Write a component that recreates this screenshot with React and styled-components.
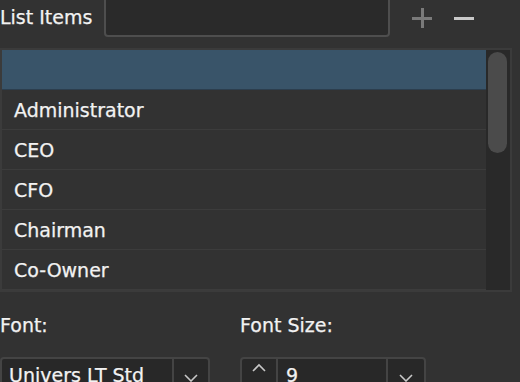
import React from 'react';
import styled, { createGlobalStyle } from 'styled-components';

const GlobalStyle = createGlobalStyle`
  html, body {
    margin: 0;
    padding: 0;
    background: #323232;
    overflow: hidden;
  }
  * { box-sizing: border-box; }
`;

const Panel = styled.div`
  width: 520px;
  height: 382px;
  overflow: hidden;
  background: #323232;
  color: #f2f2f2;
  font-family: "DejaVu Sans", "Noto Sans", sans-serif;
  -webkit-text-stroke: 0.25px #f2f2f2;
`;

const Header = styled.div`
  display: flex;
  align-items: flex-end;
  height: 37px;
`;

const HeaderLabel = styled.div`
  font-size: 19px;
  line-height: 1;
  padding-bottom: 10px;
  width: 104px;
`;

const TextInput = styled.div`
  width: 286px;
  height: 42px;
  margin-top: -5px;
  background: #2a2a2a;
  border: 2px solid #4e4e4e;
  border-radius: 4px;
`;

const IconButton = styled.div`
  width: 20px;
  height: 20px;
  align-self: center;
  margin-left: ${(p) => p.$gap}px;
  margin-top: -2px;
  position: relative;
  &::before, &::after {
    content: '';
    position: absolute;
    background: ${(p) => p.$color};
  }
  &::before {
    left: 0;
    right: 0;
    top: 9px;
    height: 3px;
  }
  &::after {
    display: ${(p) => (p.$plus ? 'block' : 'none')};
    top: 0;
    bottom: 0;
    left: 9px;
    width: 3px;
  }
`;

const ListFrame = styled.div`
  margin: 11px 0 0 0;
  width: 512px;
  height: 244px;
  border: 2px solid #3b3b3b;
  display: flex;
  background: #323232;
`;

const Rows = styled.div`
  flex: 1;
  display: flex;
  flex-direction: column;
`;

const Row = styled.div`
  height: 40px;
  flex: none;
  display: flex;
  align-items: center;
  padding: 1px 0 0 12px;
  font-size: 19px;
  background: ${(p) => (p.$selected ? '#395469' : '#323232')};
  border-bottom: 1px solid ${(p) => (p.$selected ? '#2c3e4e' : '#3c3c3c')};
`;

const ScrollTrack = styled.div`
  width: 24px;
  background: #292929;
  padding: 2px 2px 0 2px;
`;

const ScrollThumb = styled.div`
  height: 101px;
  width: 19px;
  border-radius: 10px;
  background: #4b4b4b;
`;

const FieldRow = styled.div`
  display: grid;
  grid-template-columns: 240px 186px;
  margin-top: 22px;
`;

const Field = styled.div`
  display: flex;
  flex-direction: column;
`;

const FieldLabel = styled.div`
  font-size: 19px;
  line-height: 22px;
  height: 43px;
`;

const Combo = styled.div`
  display: flex;
  width: ${(p) => p.$width}px;
  height: 40px;
  background: #282828;
  border: 2px solid #444;
  border-radius: 4px;
`;

const ComboValue = styled.div`
  flex: 1;
  font-size: 19px;
  padding: 7px 0 0 ${(p) => p.$pad}px;
  line-height: 1;
  white-space: nowrap;
`;

const ComboSide = styled.div`
  width: ${(p) => p.$width}px;
  display: flex;
  justify-content: center;
  padding-top: ${(p) => p.$top}px;
  border-left: ${(p) => (p.$left ? 'none' : '2px solid #444')};
  border-right: ${(p) => (p.$left ? '2px solid #444' : 'none')};
`;

const Chevron = ({ up }) => (
  <svg width="16" height="10" viewBox="0 0 16 10">
    <path
      d={up ? 'M2 8 L8 2 L14 8' : 'M2 2 L8 8 L14 2'}
      fill="none"
      stroke="#c8c8c8"
      strokeWidth="1.6"
    />
  </svg>
);

const items = ['', 'Administrator', 'CEO', 'CFO', 'Chairman', 'Co-Owner'];

export default function App() {
  return (
    <>
      <GlobalStyle />
      <Panel>
        <Header>
          <HeaderLabel>List Items</HeaderLabel>
          <TextInput />
          <IconButton $plus $gap={22} $color="#7a7a7a" />
          <IconButton $gap={22} $color="#c9c9c9" />
        </Header>
        <ListFrame>
          <Rows>
            {items.map((item, i) => (
              <Row key={i} $selected={i === 0}>{item}</Row>
            ))}
          </Rows>
          <ScrollTrack>
            <ScrollThumb />
          </ScrollTrack>
        </ListFrame>
        <FieldRow>
          <Field>
            <FieldLabel>Font:</FieldLabel>
            <Combo $width={210}>
              <ComboValue $pad={7}>Univers LT Std</ComboValue>
              <ComboSide $width={36} $top={14}>
                <Chevron />
              </ComboSide>
            </Combo>
          </Field>
          <Field>
            <FieldLabel>Font Size:</FieldLabel>
            <Combo $width={186}>
              <ComboSide $left $width={36} $top={4}>
                <Chevron up />
              </ComboSide>
              <ComboValue $pad={8}>9</ComboValue>
              <ComboSide $width={38} $top={14}>
                <Chevron />
              </ComboSide>
            </Combo>
          </Field>
        </FieldRow>
      </Panel>
    </>
  );
}
